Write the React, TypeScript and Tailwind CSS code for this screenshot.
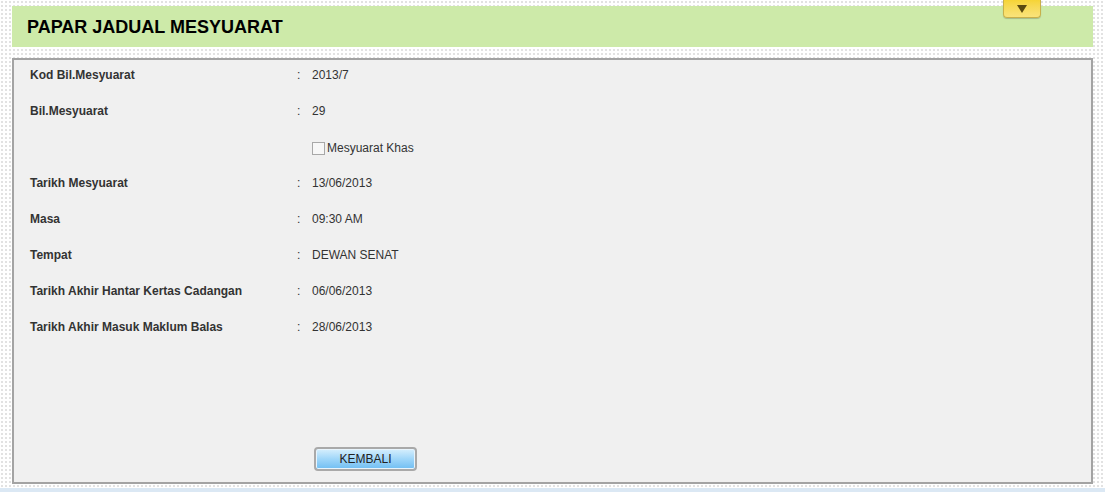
const rows: Array<{ label: string; value?: string; checkbox?: string }> = [
  { label: 'Kod Bil.Mesyuarat', value: '2013/7' },
  { label: 'Bil.Mesyuarat', value: '29' },
  { label: '', checkbox: 'Mesyuarat Khas' },
  { label: 'Tarikh Mesyuarat', value: '13/06/2013' },
  { label: 'Masa', value: '09:30 AM' },
  { label: 'Tempat', value: 'DEWAN SENAT' },
  { label: 'Tarikh Akhir Hantar Kertas Cadangan', value: '06/06/2013' },
  { label: 'Tarikh Akhir Masuk Maklum Balas', value: '28/06/2013' },
]

export default function App() {
  return (
    <div
      className="relative h-[492px] w-[1105px] overflow-hidden bg-white bg-[radial-gradient(#e2e2e2_1px,transparent_1.2px)] bg-[size:4px_4px] text-[12px] text-[#333]"
      style={{ fontFamily: '"Liberation Sans", Arial, sans-serif' }}
    >
      <div className="flex flex-col px-3 pt-[6px]">
        <div className="flex h-[41px] items-center bg-[#cdeaa9] pl-[15px]">
          <h1 className="text-[18px] font-bold leading-none text-black">PAPAR JADUAL MESYUARAT</h1>
        </div>

        <div className="mt-[11px] flex h-[426px] flex-col border-2 border-[#a3a3a3] bg-[#f0f0f0] pl-4 pt-[7px] pb-[11px]">
          {rows.map((row, i) => (
            <div key={i} className="flex h-[36px] items-start leading-4">
              <div className="w-[267px] font-bold">{row.label}</div>
              <div className="w-[15px]">{row.checkbox ? '' : ':'}</div>
              {row.checkbox ? (
                <label className="mt-[1px] flex items-center gap-[2px]">
                  <span className="inline-block h-[13px] w-[13px] border border-[#a8a8a8] bg-[#f7f7f7]" />
                  <span>{row.checkbox}</span>
                </label>
              ) : (
                <div>{row.value}</div>
              )}
            </div>
          ))}

          <div className="mt-auto pl-[284px]">
            <button
              type="button"
              className="h-[24px] w-[103px] rounded-[4px] border-2 border-[#a9a9a9] bg-gradient-to-b from-[#d7effd] via-[#9fd6f9] to-[#6fbef3] text-[12px] leading-none text-[#222] shadow-[inset_0_0_0_1px_#e8f4fc]"
            >
              KEMBALI
            </button>
          </div>
        </div>
      </div>

      <div className="absolute bottom-0 left-0 h-[4px] w-full bg-[#dbe8f4]" />

      <div className="absolute left-[1003px] top-0 flex h-[18px] w-[38px] items-center justify-center rounded-b-[4px] border border-t-0 border-[#c8b04a] bg-gradient-to-b from-[#f6d434] to-[#f9e37a] shadow-[0_1px_1px_rgba(0,0,0,0.2)]">
        <svg width="10" height="8" viewBox="0 0 10 8">
          <path d="M0 0 L10 0 L5 8 Z" fill="#5a4a10" />
        </svg>
      </div>
    </div>
  )
}
